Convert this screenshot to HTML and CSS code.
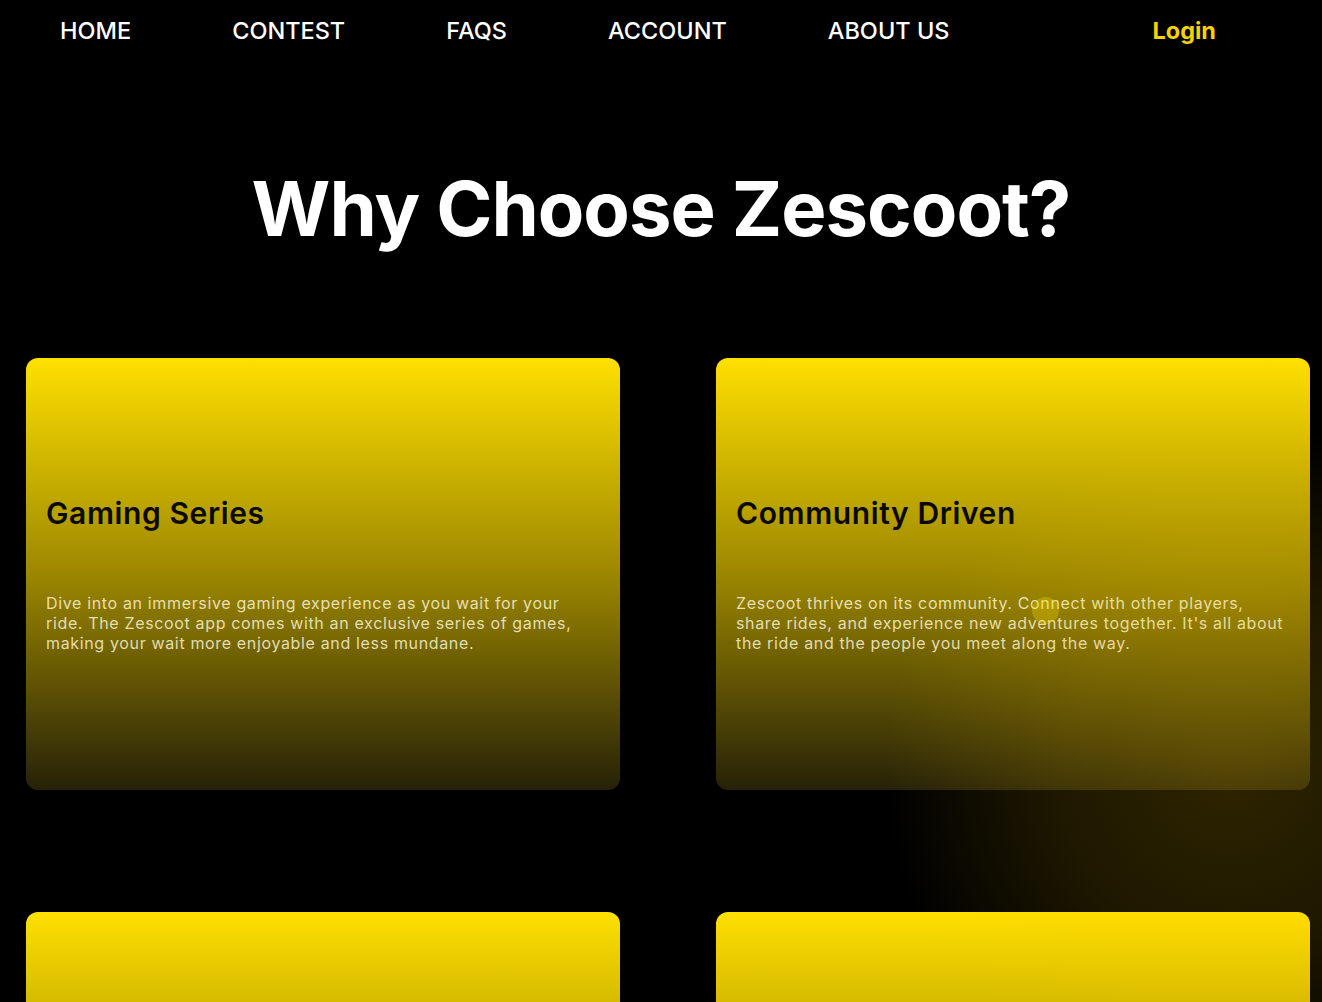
FILE: index.html
```html
<!DOCTYPE html>
<html lang="en">
<head>
<meta charset="utf-8">
<title>Zescoot</title>
<link rel="stylesheet" href="styles.css">
</head>
<body>
<header class="nav">
  <ul class="nav-links">
    <li><a href="#">HOME</a></li>
    <li><a href="#">CONTEST</a></li>
    <li><a href="#">FAQS</a></li>
    <li><a href="#">ACCOUNT</a></li>
    <li><a href="#">ABOUT US</a></li>
  </ul>
  <a class="login" href="#">Login</a>
</header>
<main class="why">
  <h1 class="why-title">Why Choose Zescoot?</h1>
  <div class="cards">
    <article class="card">
      <h3 class="card-title">Gaming Series</h3>
      <p class="card-text">Dive into an immersive gaming experience as you wait for your ride. The Zescoot app comes with an exclusive series of games, making your wait more enjoyable and less mundane.</p>
    </article>
    <article class="card">
      <h3 class="card-title">Community Driven</h3>
      <p class="card-text">Zescoot thrives on its community. Connect with other players, share rides, and experience new adventures together. It's all about the ride and the people you meet along the way.</p>
    </article>
    <article class="card">
      <h3 class="card-title">Win Rewards</h3>
      <p class="card-text">Take part in weekly contests and climb the leaderboard to earn exciting rewards, free rides and exclusive perks.</p>
    </article>
    <article class="card">
      <h3 class="card-title">Eco Friendly</h3>
      <p class="card-text">Every ride on a Zescoot is a step towards a greener city. Enjoy the journey while helping the planet.</p>
    </article>
  </div>
  <div class="glow"></div>
  <div class="cursor-dot"></div>
</main>
</body>
</html>
```
FILE: styles.css
```css
* { box-sizing: border-box; }
html, body { margin: 0; padding: 0; background: #000; }
body {
  font-family: "Inter", "Liberation Sans", sans-serif;
  color: #fff;
}
.nav {
  display: flex;
  align-items: center;
  height: 60px;
  padding: 0 106px 0 60px;
}
.nav-links {
  display: flex;
  gap: 101px;
  list-style: none;
  margin: 0;
  padding: 0;
}
.nav-links a {
  color: #fff;
  text-decoration: none;
  font-size: 23.5px;
  font-weight: 500;
}
.login {
  margin-left: auto;
  color: #f5d100;
  text-decoration: none;
  font-size: 23.5px;
  font-weight: 700;
}
.why {
  position: relative;
  overflow: hidden;
}
.why-title {
  margin: 0;
  padding: 110px 0 112px;
  text-align: center;
  font-size: 76px;
  font-weight: 700;
  line-height: 1;
  letter-spacing: -1px;
}
.cards {
  display: grid;
  grid-template-columns: 594px 594px;
  column-gap: 96px;
  row-gap: 122px;
  padding: 0 12px 0 26px;
}
.card {
  height: 432px;
  border-radius: 12px;
  padding: 0 26px 0 20px;
  display: flex;
  flex-direction: column;
  justify-content: center;
  background: linear-gradient(180deg, #ffe000 0%, #9c8700 50%, #262108 100%);
}
.card-title {
  margin: 0 0 62px;
  font-size: 30px;
  font-weight: 600;
  letter-spacing: 0.6px;
  color: #0a0a00;
}
.card-text {
  margin: 0;
  font-size: 16px;
  line-height: 20px;
  letter-spacing: 0.65px;
  color: rgba(255, 248, 220, 0.82);
}
.glow {
  position: absolute;
  left: 880px;
  top: 360px;
  width: 700px;
  height: 700px;
  border-radius: 50%;
  background: radial-gradient(circle, rgba(255, 200, 0, 0.18) 0%, rgba(255, 200, 0, 0.12) 35%, rgba(255, 200, 0, 0) 70%);
  pointer-events: none;
}
.cursor-dot {
  position: absolute;
  left: 1032px;
  top: 537px;
  width: 27px;
  height: 27px;
  border-radius: 50%;
  background: rgba(255, 225, 0, 0.28);
  pointer-events: none;
}
```
